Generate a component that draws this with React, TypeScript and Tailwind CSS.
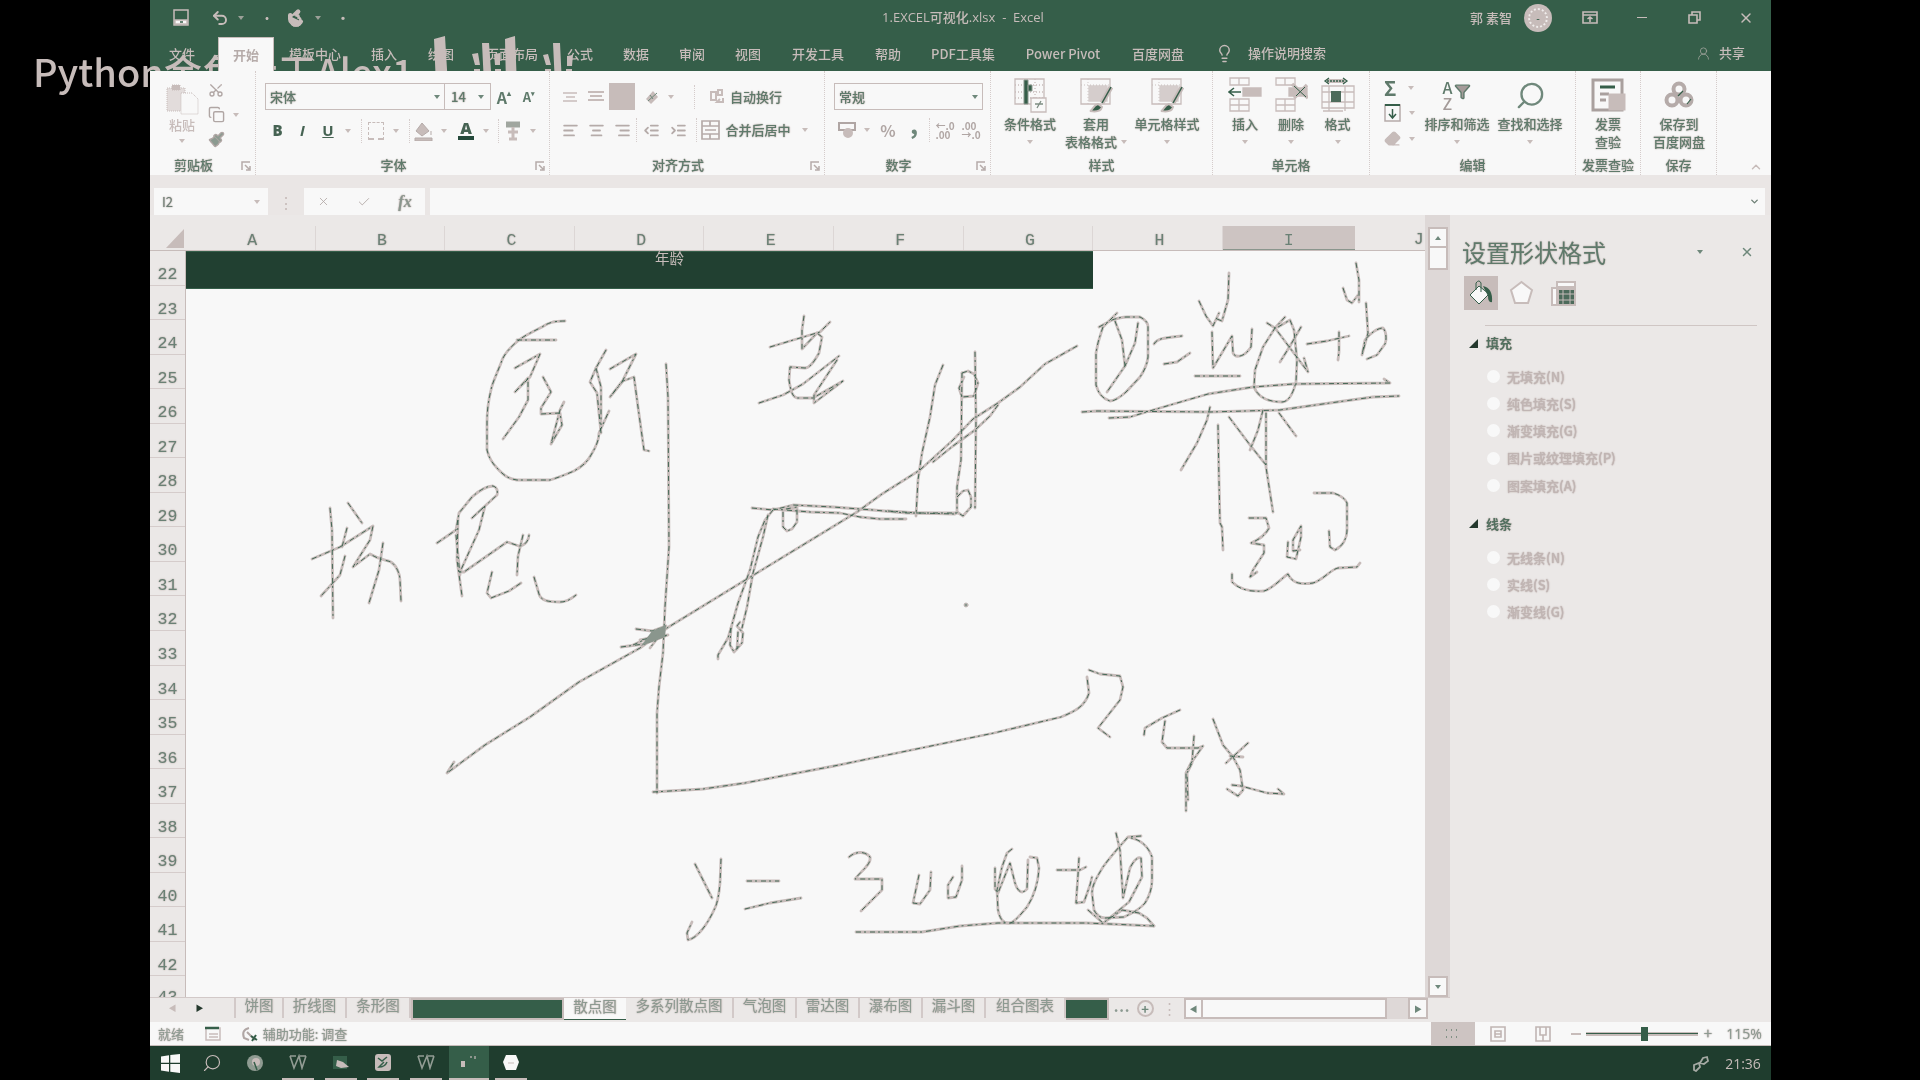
import React from 'react';
import {
  Undo2, Scissors, Copy, Paintbrush, Search, Lightbulb, UserRound, X, Check, ChevronUp, ChevronDown,
  AlignLeft, AlignCenter, AlignRight, IndentDecrease, IndentIncrease, Eraser, Filter, Pointer,
} from 'lucide-react';

const halo = '[text-shadow:0_0_1px_#c7bcba,0_0_1px_#c7bcba,0_0_2px_#c7bcba]';

/** Box of fixed width which centres its content. */
function C({ w, children, className = '' }: { w: string; children?: React.ReactNode; className?: string }) {
  return <div className={`flex shrink-0 items-center justify-center whitespace-nowrap ${w} ${className}`}>{children}</div>;
}

function Caret({ dark = false }: { dark?: boolean }) {
  return (
    <svg width="6" height="4" viewBox="0 0 6 4" className="shrink-0">
      <path d="M0 0h6L3 4z" fill={dark ? '#6f887b' : '#c7bcba'} />
    </svg>
  );
}

function Launcher() {
  return (
    <svg width="10" height="10" viewBox="0 0 10 10" className="absolute right-1 bottom-1" fill="none" stroke="#b5aba9" strokeWidth="1.5">
      <path d="M1 9V1h8M4 4l4 4M9 5v4H5" />
    </svg>
  );
}

function Group({ w, label, launcher, children }: { w: string; label: string; launcher?: boolean; children: React.ReactNode }) {
  return (
    <div className={`relative flex shrink-0 flex-col border-r border-dotted border-[#d5cccb] ${w}`}>
      <div className="h-[85px]">{children}</div>
      <div className={`text-center leading-[18px] ${launcher ? 'pr-[18px]' : ''} ${halo}`}>{label}</div>
      {launcher && <Launcher />}
    </div>
  );
}

function Big({ w, icon, lines, caret }: { w: string; icon: React.ReactNode; lines: string[]; caret?: boolean }) {
  return (
    <div className={`flex shrink-0 flex-col items-center ${w}`}>
      <div className="flex h-[44px] items-center pt-1">{icon}</div>
      {lines.map((l, i) => (
        <div key={l} className={`flex h-[18px] items-center gap-1 whitespace-nowrap ${halo}`}>
          {l}{i === 1 && caret && <Caret />}
        </div>
      ))}
      {lines.length === 1 && caret && <div className="flex h-[18px] items-center"><Caret /></div>}
    </div>
  );
}

const Sep = () => <div className="h-6 w-px shrink-0 border-l border-dotted border-[#d5cccb]" />;
const G = '#355e49';
const P = '#c7bcba';

function TableIcon({ kind }: { kind: 'cond' | 'table' | 'cell' }) {
  return (
    <svg width="34" height="36" viewBox="0 0 34 36" fill="none" stroke={P} strokeWidth="1.3">
      <path d="M2 2h29v25H2z" />
      {kind === 'cond' ? (
        <g><path d="M2 8h29M2 15h29M2 21h29M22 2v25" strokeDasharray="1 2" /><path d="M11 3h4v24h-4zM15 8h4v6h-4z" fill={G} stroke="#8a968d" strokeWidth="1" /><path d="M18 21h15v14H18z" fill="#f8f8f8" /><path d="M24 31l4-7M22 27h8" stroke="#7d8d83" /></g>
      ) : (
        <g><path d="M2 8h29M9 2v25" opacity=".6" strokeDasharray="1 2" /><path d="M10 9h18v15H10z" fill={P} opacity=".7" /><path d="M32 10l-9 16" stroke={P} strokeWidth="5" /><path d="M32 10l-9 16" stroke={G} strokeWidth="1.500" /><path d="M11 34c3-1 3-6 8-7l4 3c-1 4-6 5-12 4z" fill={G} strokeWidth="2" /></g>
      )}
    </svg>
  );
}

function CellsIcon({ kind }: { kind: 'in' | 'del' | 'fmt' }) {
  return (
    <svg width="34" height="36" viewBox="0 0 34 36" fill="none" stroke={P} strokeWidth="1.3">
      {kind === 'fmt' ? (
        <g><path d="M6 4h18" strokeWidth="4" /><path d="M6 4h18" stroke={G} strokeDasharray="2 1" /><path d="M8 1L4 4l4 3M22 1l4 3-4 3" stroke={G} /><path d="M1 9h32v22H1zM1 15h32M1 25h32M8 9v25M24 9v25M2 34h20" /><path d="M10 14h10v11H10z" fill="#4d6b5b" stroke="none" /></g>
      ) : (
        <g><path d="M2 1h19v7H2zM11 1v7M2 22h19v12H2zM2 28h19M11 22v12" /><path d="M15 11h18v8H15z" fill={P} />
          {kind === 'in' ? <path d="M13 15H1M6 11l-5 4 5 4" stroke={G} strokeWidth="1.600" /> : <g><path d="M18 7l16 14M33 8L20 21" strokeWidth="3.500" /><path d="M20 9l12 11M31 10L22 19" stroke={G} strokeWidth="1" /></g>}</g>
      )}
    </svg>
  );
}

const tabs: [string, string][] = [
  ['文件', 'w-[64px]'], ['开始', 'w-[56px]'], ['模板中心', 'w-[82px]'], ['插入', 'w-[56px]'], ['绘图', 'w-[58px]'],
  ['页面布局', 'w-[84px]'], ['公式', 'w-[52px]'], ['数据', 'w-[60px]'], ['审阅', 'w-[52px]'], ['视图', 'w-[60px]'],
  ['开发工具', 'w-[80px]'], ['帮助', 'w-[60px]'], ['PDF工具集', 'w-[90px]'], ['Power Pivot', 'w-[110px]'], ['百度网盘', 'w-[80px]'],
];

function TitleBar() {
  return (
    <div className="h-[71px] bg-[#355e49] text-[13px] font-medium text-[#c7bcba]">
      <div className="flex h-[35px] items-center">
        <C w="w-[62px]">
          <svg width="16" height="17" viewBox="0 0 16 17" fill="none" stroke={P} strokeWidth="1.5"><path d="M1 1h14v15H1z" /><path d="M2 11h12v4H2z" fill="#f8f8f8" /><path d="M7 13h3" stroke={G} /></svg>
        </C>
        <Undo2 size={18} strokeWidth={2.600} className="-ml-px mr-[9px] shrink-0" />
        <C w="w-[6px]" className="opacity-70"><Caret /></C>
        <C w="w-[10px]" className="ml-[18px]">·</C>
        <Pointer size={18} className="ml-[15px] shrink-0 rotate-45 fill-[#c7bcba]" />
        <C w="w-[26px]" className="opacity-70"><Caret /></C>
        <C w="w-[24px]" className="font-bold">•</C>
        <C w="w-[170px]" className="ml-[523px] font-['Open_Sans','Noto_Sans_CJK_SC',sans-serif]">1.EXCEL可视化.xlsx&nbsp; -&nbsp; Excel</C>
        <C w="w-[44px]" className="ml-[421px]">郭 素智</C>
        <C w="w-[28px]" className="ml-[11px] h-7 rounded-full bg-[#c7bcba]"><div className="h-5 w-5 rounded-full border-2 border-dotted border-[#efeceb] text-center text-[10px] leading-4 text-[#355e49]">-</div></C>
        <C w="w-[18px]" className="ml-[29px]">
          <svg width="16" height="13" viewBox="0 0 16 13" fill="none" stroke={P} strokeWidth="1.6"><path d="M1 1h14v11H1zM1 4h14M8 11V6M5.500 8L8 6l2.500 2" /></svg>
        </C>
        <C w="w-[12px]" className="ml-[37px]"><div className="h-px w-2.5 bg-[#c7bcba]" /></C>
        <C w="w-[14px]" className="ml-[39px]">
          <svg width="13" height="13" viewBox="0 0 13 13" fill="none" stroke={P} strokeWidth="1.600"><path d="M1 4h8v8H1zM4 4V1h8v8H9" /></svg>
        </C>
        <C w="w-[16px]" className="ml-[37px]"><X size={16} strokeWidth={2.200} /></C>
      </div>
      <div className="flex h-[36px] items-center">
        {tabs.map(([t, w]) => (
          <div key={t} className={`flex h-[34px] shrink-0 items-center justify-center self-end whitespace-nowrap ${w} ${t === '文件' ? 'mr-[4px]' : ''} ${t === '开始' ? 'border border-b-0 border-[#c7bcba] bg-[#f8f8f8] font-bold text-[#b5aba9]' : ''}`}>{t}</div>
        ))}
        <Lightbulb size={19} strokeWidth={1.800} className="ml-[17px] shrink-0" />
        <C w="w-[80px]" className="ml-[13px]">操作说明搜索</C>
        <UserRound size={15} strokeWidth={1.200} className="ml-[369px] shrink-0 opacity-80" />
        <C w="w-[26px]" className="ml-[8px]">共享</C>
      </div>
    </div>
  );
}

function Ribbon() {
  return (
    <div className="flex h-[104px] bg-[#f8f8f8] text-[13px] font-medium text-[#5f7a6b]">
      <Group w="w-[106px]" label="剪贴板" launcher>
        <div className="flex">
          <div className="ml-[12px] flex w-[40px] flex-col items-center pt-[13px] text-[#c7bcba]">
            <svg width="34" height="32" viewBox="0 0 34 32" fill="none" stroke={P} strokeDasharray="1 1"><path d="M2 4h18v23H2z" fill="#e2dcdb" /><path d="M7 1h8v5H7z" fill={P} /><path d="M16 9h11l6 6v15H16z" fill="#f8f8f8" /></svg>
            <div className="leading-[18px]">粘贴</div>
            <div className="pt-[5px]"><Caret /></div>
          </div>
          <div className="ml-[6px] flex flex-col gap-[8px] pt-[11px] text-[#b0a6a4]">
            <Scissors size={16} className="-rotate-90" />
            <div className="flex items-center gap-2"><Copy size={17} /><Caret /></div>
            <Paintbrush size={17} className="fill-[#8b9a90]" />
          </div>
        </div>
      </Group>

      <Group w="w-[294px]" label="字体" launcher>
        <div className="flex items-center pt-[12px] pl-[9px]">
          <div className="flex h-[27px] w-[180px] items-center justify-between border border-[#c7bcba] px-1"><span className={halo}>宋体</span><Caret dark /></div>
          <div className="flex h-[27px] w-[46px] items-center justify-between border border-l-0 border-[#c7bcba] px-1.5"><span className={halo}>14</span><Caret dark /></div>
          <C w="w-[26px]" className="text-[16px] font-bold">A<sup className="text-[8px]">▴</sup></C>
          <C w="w-[24px]" className="text-[13px] font-bold">A<sup className="text-[7px]">▾</sup></C>
        </div>
        <div className="flex h-[28px] items-center pt-[13px] pl-[9px] font-['Open_Sans',sans-serif] text-[#466353]">
          <C w="w-[25px]" className="text-[15px] font-extrabold">B</C>
          <C w="w-[25px]" className="text-[15px] font-bold italic">I</C>
          <C w="w-[26px]" className="text-[15px] font-bold underline">U</C>
          <C w="w-[14px]"><Caret /></C><C w="w-[12px]"><Sep /></C>
          <C w="w-[18px]"><div className="h-[18px] w-4 border border-b-2 border-dashed border-[#c7bcba]" /></C>
          <C w="w-[22px]"><Caret /></C><C w="w-[4px]"><Sep /></C>
          <C w="w-[24px]"><svg width="19" height="20" viewBox="0 0 19 20"><path d="M8 2l7 8-7 5-6-5zM17 10v4M1 17h17v3H1z" fill={P} stroke="#b5aba9" /></svg></C>
          <C w="w-[18px]"><Caret /></C>
          <C w="w-[26px]"><div className="border-b-4 border-[#24493a] px-0.5 text-[16px] leading-[15px] font-extrabold">A</div></C>
          <C w="w-[14px]"><Caret /></C><C w="w-[10px]"><Sep /></C>
          <C w="w-[20px]"><svg width="16" height="20" viewBox="0 0 16 20" stroke={P} strokeWidth="3" fill="none"><path d="M1 2h14M1 5h14" stroke="#a0a69f" /><path d="M8 6v12M3 11h10M4 18h8" /></svg></C>
          <C w="w-[20px]"><Caret /></C>
        </div>
      </Group>

      <Group w="w-[275px]" label="对齐方式" launcher>
        <div className="flex items-center pt-[12px] pl-[7px] text-[#b5aba9]">
          <C w="w-[26px]"><svg width="14" height="10" stroke={P} strokeWidth="1.500"><path d="M0 1h14M3 5h9M0 9h14" /></svg></C>
          <C w="w-[26px]"><svg width="16" height="11" stroke={P} strokeWidth="2"><path d="M0 1h16M2 5h12M0 9h16" /></svg></C>
          <div className="h-[27px] w-[26px] bg-[#c7bcba]" />
          <C w="w-[34px]"><svg width="16" height="16" viewBox="0 0 16 16" fill="none"><path d="M2 10l7-8 5 6-7 7z" fill={P} /><path d="M4 12L13 4M6 6l3 4" stroke="#6f887b" /></svg></C>
          <C w="w-[4px]"><Caret /></C>
          <C w="w-[42px]"><Sep /></C>
          <svg width="15" height="18" viewBox="0 0 15 18" className="-ml-[6px] shrink-0" fill="none" stroke={P} strokeWidth="2"><path d="M2 4h5v8H2zM9 2h4v5H9zM14 10v4H8l3-3" /></svg>
          <C w="w-[54px]" className={`ml-[5px] text-[#5f7a6b] ${halo}`}>自动换行</C>
        </div>
        <div className="flex items-center pt-[8px] pl-[7px] text-[#b5aba9]">
          <C w="w-[26px]"><AlignLeft size={17} strokeWidth={2.500} /></C><C w="w-[26px]"><AlignCenter size={17} strokeWidth={2.500} /></C><C w="w-[26px]"><AlignRight size={17} strokeWidth={2.500} /></C>
          <C w="w-[3px]"><Sep /></C>
          <C w="w-[27px]"><IndentDecrease size={17} strokeWidth={2.500} /></C><C w="w-[26px]"><IndentIncrease size={17} strokeWidth={2.500} /></C>
          <C w="w-[10px]"><Sep /></C>
          <svg width="19" height="20" viewBox="0 0 19 20" fill="none" stroke="#b5aba9" strokeWidth="1.700"><path d="M1 1h17v18H1zM1 6h17M1 14h17M9 1v5M9 14v5M4 10h11" /></svg>
          <C w="w-[66px]" className={`ml-[5px] text-[#5f7a6b] ${halo}`}>合并后居中</C>
          <C w="w-[28px]"><Caret /></C>
        </div>
      </Group>

      <Group w="w-[166px]" label="数字" launcher>
        <div className="flex pt-[12px] pl-[9px]">
          <div className="flex h-[27px] w-[149px] items-center justify-between border border-[#c7bcba] px-1"><span className={halo}>常规</span><Caret dark /></div>
        </div>
        <div className="flex items-center pt-[8px] pl-[10px] text-[#b0a6a4]">
          <C w="w-[24px]"><svg width="18" height="19" viewBox="0 0 18 19" fill="none" stroke="#b0a6a4" strokeWidth="2"><path d="M1 2h16v7H1z" /><ellipse cx="10" cy="12" rx="4" ry="4" fill={P} stroke={P} /></svg></C>
          <C w="w-[16px]"><Caret /></C>
          <C w="w-[26px]" className="text-[16px] font-bold">%</C>
          <C w="w-[26px]" className="h-5 pb-3 text-[22px] font-black text-[#6f887b]">,</C>
          <C w="w-[4px]"><Sep /></C>
          <C w="w-[28px]" className="text-[10px] leading-[9px] font-bold"><span>←.0<br />.00</span></C>
          <C w="w-[24px]" className="text-[10px] leading-[9px] font-bold"><span>.00<br />→.0</span></C>
        </div>
      </Group>

      <Group w="w-[222px]" label="样式">
        <div className="flex pl-[6px]">
          <Big w="w-[66px]" icon={<TableIcon kind="cond" />} lines={['条件格式']} caret />
          <Big w="w-[66px]" icon={<TableIcon kind="table" />} lines={['套用', '表格格式']} caret />
          <Big w="w-[76px]" icon={<TableIcon kind="cell" />} lines={['单元格样式']} caret />
        </div>
      </Group>

      <Group w="w-[157px]" label="单元格">
        <div className="flex pl-[9px]">
          <Big w="w-[46px]" icon={<CellsIcon kind="in" />} lines={['插入']} caret />
          <Big w="w-[46px]" icon={<CellsIcon kind="del" />} lines={['删除']} caret />
          <Big w="w-[47px]" icon={<CellsIcon kind="fmt" />} lines={['格式']} caret />
        </div>
      </Group>

      <Group w="w-[206px]" label="编辑">
        <div className="flex">
          <div className="flex w-[53px] flex-col pt-[4px] pl-[14px]">
            <div className="flex h-[25px] items-center gap-2 text-[20px] font-bold"><span className="w-[16px]">Σ</span><Caret /></div>
            <div className="flex h-[25px] items-center gap-2"><svg width="17" height="19" viewBox="0 0 17 19" fill="none" stroke="#b5aba9" strokeWidth="1.500"><path d="M1 2h15v16H1z" /><path d="M1 2h15" stroke={G} strokeWidth="2" /><path d="M8.500 6v8M5 11l3.500 4 3.500-4" stroke={G} /></svg><Caret /></div>
            <div className="flex h-[27px] items-center gap-2 text-[#c7bcba]"><Eraser size={17} className="fill-[#c7bcba]" /><Caret /></div>
          </div>
          <Big w="w-[68px]" icon={<div className="flex items-center"><span className="text-[16px] leading-[16px]">A<br /><span className="text-[#a49b99]">Z</span></span><Filter size={17} strokeWidth={2} className="mb-2 ml-0.5 fill-[#a49b99]" /></div>} lines={['排序和筛选']} caret />
          <Big w="w-[78px]" icon={<Search size={31} strokeWidth={1.800} className="-scale-x-100 text-[#6f887b]" />} lines={['查找和选择']} caret />
        </div>
      </Group>

      <Group w="w-[65px]" label="发票查验">
        <Big w="w-[64px]" icon={<svg width="35" height="34" viewBox="0 0 35 34" fill="none" stroke="#a9a09e" strokeWidth="3"><path d="M2 2h29v30H2z" /><path d="M9 9h15" stroke={G} /><path d="M9 16h9M9 22h6" /><path d="M19 17h14v14H19z" fill={P} stroke={P} /></svg>} lines={['发票', '查验']} />
      </Group>
      <Group w="w-[76px]" label="保存">
        <Big w="w-[76px]" icon={<svg width="30" height="28" viewBox="0 0 30 28" fill="none" stroke="#b5aba9" strokeWidth="4"><circle cx="15" cy="8" r="5.500" /><circle cx="8" cy="19" r="5.500" /><circle cx="22" cy="19" r="5.500" /><path d="M14 15l5-5M23 23l4-5" stroke={G} strokeWidth="1.200" /></svg>} lines={['保存到', '百度网盘']} />
      </Group>
      <div className="flex flex-1 items-end justify-end pr-[8px] pb-[1px]"><ChevronUp size={14} strokeWidth={2.500} className="text-[#c7bcba]" /></div>
    </div>
  );
}

function FormulaBar() {
  return (
    <div className="flex h-[40px] items-end bg-[#eae6e5] text-[12px] text-[#6d7f75]">
      <div className="ml-1 flex h-[27px] w-[114px] items-center justify-between bg-[#f8f8f8] pr-2 pl-2"><span className={`text-[13px] ${halo}`}>I2</span><Caret /></div>
      <C w="w-[36px]" className="h-[27px] text-[16px] text-[#c7bcba]">⋮</C>
      <div className="flex h-[27px] w-[121px] items-center bg-[#f8f8f8] text-[#b0a6a4]">
        <C w="w-[38px]"><X size={13} strokeWidth={1.500} /></C><C w="w-[43px]"><Check size={14} strokeWidth={1.500} /></C>
        <C w="w-[40px]" className={`font-['Liberation_Serif',serif] text-[16px] font-bold text-[#8a968d] italic ${halo}`}>fx</C>
      </div>
      <div className="ml-[5px] flex h-[27px] w-[1335px] items-center justify-end bg-[#f8f8f8] pr-[5px]"><ChevronDown size={11} strokeWidth={3} /></div>
    </div>
  );
}

const strokes: string[] = [
  'M565 321C553 321 548 323 542 327 530 333 524 336 519 340 509 348 503 356 501 363 495 378 492 384 491 390 488 402 487 412 487 423L487 450C489 458 492 463 497 468 505 477 510 479 517 480L550 480C560 477 567 474 574 471 583 466 588 461 591 455 596 447 599 440 599 433L609 411',
  'M517 340H556', 'M515 368L540 354 530 377 515 392 528 378 528 400 519 417 503 439', 'M543 377L551 392 541 408 541 414 560 413 562 425 551 444 560 410 564 402',
  'M606 350L596 368 590 382 597 393 601 433', 'M596 368L601 387 601 425', 'M610 369L636 354 623 380 610 397 623 381 634 377 638 407 644 450 649 451',
  'M666 364L668 397 669 547 665 607 663 653 659 687 657 713 657 793',
  'M312 559L340 547 373 526 370 540 353 567 370 554C380 560 386 560 391 562 397 566 400 575 400 580L401 601', 'M330 508L332 530 333 618', 'M348 503L362 523',
  'M347 528L342 547', 'M345 556L340 575 321 596', 'M383 543L379 570 369 603',
  'M437 543L456 530 459 513 472 497C482 488 488 486 493 486 497 487 498 491 497 495L485 506 472 518 485 506 479 530 460 572 464 572 507 542 519 546C525 546 529 540 529 535',
  'M458 520L457 560 462 596', 'M456 535L460 575', 'M523 535L518 556 517 575', 'M492 572L487 593 491 598 509 591 521 583', 'M534 577L539 594C541 601 549 602 560 602 568 602 572 598 576 595',
  'M770 347L800 338 820 332 830 322', 'M804 316L802 330 802 349 817 333 822 337 819 353C813 364 809 368 805 368L790 367 789 380C791 393 793 397 797 398L813 398 843 381 814 403 814 395 837 360',
  'M759 403L783 395 803 384 839 356',
  'M1077 346L1045 364 1020 387 998 403 973 419 953 440 920 470 882 494 857 512 752 576 667 628 640 648 579 682 530 717 485 745 447 773 454 762', 'M998 405L990 416 975 430 953 446 933 462',
  'M636 629L652 631 666 626', 'M621 647L644 644 668 635 640 640', 'M633 645L663 631 650 648',
  'M752 508L773 510 793 505 833 507 873 510 907 513 957 513', 'M773 509L810 512 840 513 860 517 880 519 906 519', 'M888 511L918 513 955 514',
  'M773 510L765 520 758 537 750 570 738 603 731 628 728 638 718 655 718 659', 'M768 515L763 537 753 573 747 607 742 628', 'M731 628L730 645 734 652 742 643 743 633 737 626 740 622', 'M738 632L737 649',
  'M783 512L783 527 787 531 792 529 797 522 797 507 786 509', 'M943 365L935 385 930 417 922 453 918 480 916 516', 'M962 373L961 460 957 487 957 513', 'M975 352L976 420 975 508',
  'M962 373L968 371 974 374 978 383 974 396 962 397 959 388 964 377', 'M957 497L963 491 968 490 971 497 971 507 963 516 957 512',
  'M1099 327L1112 320C1118 318 1121 317 1127 317L1140 317C1146 320 1148 323 1148 327L1148 357C1147 366 1144 371 1140 377L1126 392C1118 399 1114 401 1110 401 1101 398 1098 392 1096 385L1096 353C1098 340 1101 333 1103 327L1117 313',
  'M1115 321L1122 340 1125 366', 'M1138 323L1135 343 1125 366 1107 392', 'M1154 344C1157 339 1161 338 1182 336', 'M1164 364L1177 362 1190 353', 'M1199 301L1206 316 1213 326 1219 313', 'M1217 319L1222 321 1228 300 1229 273',
  'M1212 332L1213 368 1232 336 1233 353C1235 358 1244 358 1251 347L1252 329', 'M1195 376H1240',
  'M1285 317L1275 328 1263 347 1255 370 1254 387C1258 398 1270 402 1282 402 1288 402 1293 394 1296 382L1297 360 1294 330 1290 320 1278 327', 'M1267 323L1275 328 1308 372 1304 358', 'M1301 327L1290 346 1280 362',
  'M1307 344L1327 341 1349 336', 'M1339 332L1339 352 1338 360', 'M1366 303L1368 333 1362 355 1365 340C1370 333 1378 328 1383 328 1386 331 1387 339 1385 344L1377 355 1367 359', 'M1356 263L1359 280 1359 302', 'M1343 288L1347 300 1352 303 1358 295',
  'M1109 418L1130 417 1153 410 1208 394 1253 387 1293 384 1390 383 1384 379', 'M1082 412L1097 411 1210 412 1280 410 1337 402 1373 397 1399 396',
  'M1210 407L1207 420 1197 443 1181 470', 'M1218 425L1219 480 1220 523 1222 527 1223 550', 'M1229 417L1250 445 1266 465', 'M1263 410L1258 430 1250 450', 'M1266 413L1266 467 1273 512', 'M1279 413L1296 436',
  'M1249 518L1266 518 1269 528C1265 536 1258 540 1251 543L1264 545 1264 553 1253 570 1250 577 1257 572', 'M1288 542L1287 557 1296 559 1301 537 1301 526 1293 540 1293 551 1300 550',
  'M1329 531L1330 547 1335 550C1343 546 1347 538 1347 530L1347 503C1344 496 1336 494 1333 493L1314 493', 'M1232 574L1232 582C1240 590 1250 592 1264 591 1272 589 1282 578 1288 574 1292 583 1300 585 1313 583 1323 580 1330 570 1338 568L1357 567 1360 563',
  'M653 792L703 789 745 783 834 766 994 733 1061 717C1076 711 1085 706 1089 693L1087 677', 'M1089 670L1100 674 1120 676 1123 687 1120 700 1098 728 1110 737', 'M1144 735L1145 728 1162 718 1180 710', 'M1165 721L1162 742 1167 748 1198 748 1203 746 1191 763 1186 773 1186 811', 'M1194 736L1192 763 1187 773 1188 800',
  'M1213 719L1223 745 1233 757 1240 770 1243 790 1238 796 1227 789', 'M1248 743L1226 763', 'M1230 756L1243 757', 'M1232 785L1241 786 1267 793 1284 794 1278 789',
  'M695 864L712 898', 'M721 859L720 883C719 895 717 905 714 910 708 923 698 938 688 940L687 933 692 922', 'M747 881H779', 'M745 909L770 903 801 898',
  'M849 857C856 851 865 851 870 857 872 864 860 872 855 879L882 879 882 890 861 911', 'M919 875L913 903 920 904 930 890 931 872', 'M953 877L948 885 948 898 956 897 962 880 962 866',
  'M995 868L995 889 998 893 1010 863 1015 883C1018 893 1023 894 1027 889L1028 860', 'M1012 849L1007 853 1002 867 997 890 998 910C1000 920 1004 924 1010 923 1015 922 1021 914 1027 907 1034 896 1038 885 1039 868L1037 858 1030 857',
  'M1057 870H1080L1086 867', 'M1079 858L1078 875 1076 903 1084 902 1090 885 1092 877', 'M1116 833L1120 850 1123 898 1130 868C1135 858 1139 857 1141 858L1142 877 1129 902 1107 920',
  'M1141 836L1128 837C1120 846 1110 857 1103 867 1097 877 1092 885 1092 893L1094 910C1097 916 1101 918 1105 918L1124 917C1135 912 1141 908 1145 903 1150 895 1152 888 1152 880L1152 857C1148 846 1141 840 1131 838',
  'M1088 910L1103 923 1122 910 1139 913 1147 918 1154 926', 'M856 932L922 932 960 926 998 923 1086 923 1110 924 1154 926',
];

function Ink() {
  return (
    <svg className="absolute top-0 left-0" width="1239" height="746" viewBox="186 251 1239 746" fill="none" strokeLinejoin="round" strokeLinecap="round">
      <g stroke="#c7bcba" strokeWidth="2.800">{strokes.map((d) => <path key={d} d={d} />)}</g>
      <g stroke="#355e49" strokeWidth=".9" strokeDasharray="5 3 2 4" strokeLinecap="butt">{strokes.map((d) => <path key={d} d={d} />)}</g>
      <path d="M652 631l14-6-1 12-24 9z" fill="#8a968d" />
      <circle cx="966" cy="605" r="2" fill="#8a968d" stroke="#c7bcba" />
    </svg>
  );
}

const rows = ['22', '23', '24', '25', '26', '27', '28', '29', '30', '31', '32', '33', '34', '35', '36', '37', '38', '39', '40', '41', '42'];

function Sheet() {
  return (
    <div className="flex w-[1275px] flex-col font-['Liberation_Mono',monospace] text-[16.500px] text-[#6a8175]">
      <div className="flex h-[36px] items-end border-b border-[#c7bcba] bg-[#ebe8e7]">
        <div className="flex h-full w-[36px] items-end justify-end pr-[2px] pb-[2px]"><svg width="18" height="19"><path d="M18 0v19H0z" fill={P} /></svg></div>
        {['A', 'B', 'C', 'D', 'E', 'F', 'G', 'H'].map((c) => (
          <div key={c} className={`h-[24px] w-[129.6px] shrink-0 border-r border-[#dcd6d5] pl-1 text-center leading-[30px] ${halo}`}>{c}</div>
        ))}
        <div className="h-[24px] w-[132px] shrink-0 border-b border-[#8a968d] bg-[#cdc4c2] text-center leading-[30px]">I</div>
        <div className={`ml-[59px] leading-[20px] ${halo}`}>J</div>
      </div>
      <div className="flex h-[746px]">
        <div className="flex h-full w-[36px] flex-col overflow-hidden border-r border-[#c7bcba] bg-[#ebe8e7]">
          {rows.map((r) => (
            <div key={r} className={`h-[34.55px] shrink-0 border-b border-[#d5cccb] pt-[7px] text-center leading-[34px] ${halo}`}>{r}</div>
          ))}
          <div className={`h-[30px] shrink-0 pt-[5px] text-center leading-[34px] ${halo}`}>43</div>
        </div>
        <div className="relative h-full flex-1 overflow-hidden bg-[#f8f8f8]">
          <div className="h-[38px] w-[907px] border-y border-[#355e49] bg-[#214031] pl-[469px] font-['Noto_Sans_CJK_SC',sans-serif] text-[14.500px] leading-[12px] text-[#c7bcba]">年龄</div>
          <Ink />
        </div>
      </div>
    </div>
  );
}

function VScroll() {
  return (
    <div className="flex w-[25px] flex-col items-center bg-[#ded8d7] pt-[12px]">
      <C w="w-[20px]" className="h-[21px] border-2 border-[#c7bcba] bg-[#f8f8f8]"><div className="rotate-180"><Caret dark /></div></C>
      <div className="h-[22px] w-[20px] border-2 border-t-0 border-[#c7bcba] bg-[#f8f8f8]" />
      <div className="flex-1" />
      <C w="w-[20px]" className="h-[21px] border-2 border-[#c7bcba] bg-[#f8f8f8]"><Caret dark /></C>
    </div>
  );
}

function Section({ title, items }: { title: string; items: string[] }) {
  return (
    <div>
      <div className="flex h-[34px] items-center pl-[19px]">
        <svg width="10" height="9"><path d="M9 0v9H0z" fill="#24382d" /></svg>
        <span className={`ml-[7px] font-bold text-[#52705f] ${halo}`}>{title}</span>
      </div>
      <div className="flex flex-col pt-[3px] text-[#c0b5b3]">
        {items.map((t) => (
          <div key={t} className={`flex h-[27.200px] items-center pl-[37px] font-medium ${halo}`}><span className="mr-[7px] h-[13px] w-[13px] rounded-full bg-[#f8f8f8]" />{t}</div>
        ))}
      </div>
    </div>
  );
}

function FormatPanel() {
  return (
    <div className="flex-1 bg-[#ebe8e7] text-[13px]">
      <div className="mt-[15px] flex h-[44px] items-center pl-[12px]">
        <span className={`w-[150px] text-[24px] whitespace-nowrap text-[#5f7a6b] ${halo}`}>设置形状格式</span>
        <C w="w-[10px]" className="ml-[83px]"><Caret dark /></C>
        <C w="w-[16px]" className="ml-[34px] text-[#6f887b]"><X size={14} strokeWidth={2.500} /></C>
      </div>
      <div className="ml-[14px] flex h-[38px] items-center">
        <C w="w-[34px]" className="h-[34px] bg-[#c7bcba]">
          <svg width="27" height="26" viewBox="0 0 27 26" fill="none"><path d="M11 6L2 15l9 9 10-10z" fill="#f8f8f8" stroke={G} /><path d="M8 10V3q3-4 5 0v9" stroke={G} /><path d="M15 6q10 2 9 16-4 1-4-6z" fill={G} /></svg>
        </C>
        <C w="w-[46px]"><svg width="25" height="26" viewBox="0 0 25 26"><path d="M12.500 2L23 10l-4 13H6L2 10z" fill="#f8f8f8" stroke={P} strokeWidth="2" /></svg></C>
        <C w="w-[38px]"><svg width="25" height="25" viewBox="0 0 25 25" fill="none" stroke="#c7bcba" strokeWidth="2"><path d="M6 1h18v5H6zM1 7h5v17H1z" fill="#f8f8f8" /><path d="M7 8h17v16H7z" fill="#4d6b5b" /><path d="M12 8v16M19 8v16M7 13h17M7 19h17" strokeWidth="1" /></svg></C>
      </div>
      <div className="mt-[13px] mr-[14px] ml-[35px] h-px bg-[#cfc6c4]" />
      <Section title="填充" items={['无填充(N)', '纯色填充(S)', '渐变填充(G)', '图片或纹理填充(P)', '图案填充(A)']} />
      <div className="h-[8px]" />
      <Section title="线条" items={['无线条(N)', '实线(S)', '渐变线(G)']} />
    </div>
  );
}

const sheets: [string, string][] = [
  ['饼图', 'w-[48px]'], ['折线图', 'w-[63px]'], ['条形图', 'w-[64px]'], ['', 'w-[153px]'], ['散点图', 'w-[62px]'], ['多系列散点图', 'w-[108px]'],
  ['气泡图', 'w-[63px]'], ['雷达图', 'w-[63px]'], ['瀑布图', 'w-[63px]'], ['漏斗图', 'w-[63px]'], ['组合图表', 'w-[80px]'],
];

function SheetTabs() {
  return (
    <div className="flex h-[25px] items-start border-t border-[#d2c9c8] bg-[#ebe8e7] text-[14.500px] text-[#8c9a91]">
      <C w="w-[86px]" className="h-[20px] gap-[19px] border-r-2 border-[#d2c9c8] pr-3"><span className="text-[8px] text-[#c7bcba]">◀</span><span className="text-[8px] text-[#24382d]">▶</span></C>
      {sheets.map(([t, w]) =>
        t === '' ? (
          <div key="g" className={`h-[22px] shrink-0 border-2 border-[#c7bcba] bg-[#355e49] ${w}`} />
        ) : (
          <C key={t} w={w} className={`${halo} ${t === '散点图' ? 'h-[22px] border-b border-[#355e49] bg-[#f8f8f8] pb-1.5' : 'h-[20px] border-r-2 border-[#d2c9c8] pb-1.5'}`}>{t}</C>
        ),
      )}
      <div className="h-[22px] w-[43px] shrink-0 border-2 border-l-0 border-[#c7bcba] bg-[#355e49]" />
      <C w="w-[26px]" className="h-[20px] pb-1 font-bold tracking-wider">...</C>
      <C w="w-[18px]" className="ml-px h-[20px]"><div className="flex h-[17px] w-[17px] items-center justify-center rounded-full border-2 border-[#c7bcba] text-[13px] leading-none font-bold text-[#6f887b]">+</div></C>
      <C w="w-[30px]" className="h-[20px] text-[#c7bcba]">⋮</C>
      <C w="w-[19px]" className="h-[21px] border-2 border-[#c7bcba] bg-[#f8f8f8] text-[8px] text-[#6f887b]">◀</C>
      <div className="h-[21px] w-[184px] shrink-0 border-y-2 border-r-2 border-[#c7bcba] bg-[#f8f8f8]" />
      <div className="h-[21px] w-[21px] shrink-0 bg-[#ded8d7]" />
      <C w="w-[20px]" className="h-[21px] border-2 border-[#c7bcba] bg-[#f8f8f8] text-[8px] text-[#6f887b]">▶</C>
    </div>
  );
}

function StatusBar() {
  return (
    <div className={`flex h-[24px] items-center border-b border-[#c7bcba] bg-[#f8f8f8] text-[13px] text-[#8c9a91] ${halo}`}>
      <C w="w-[26px]" className="ml-[8px]">就绪</C>
      <svg width="16" height="15" viewBox="0 0 16 15" className="ml-[21px]" fill="none" stroke={P} strokeWidth="1.500"><path d="M1 2h14v12H1zM4 8h9M4 11h9" /><path d="M0 2h14" stroke={G} strokeWidth="2.500" /></svg>
      <svg width="17" height="16" viewBox="0 0 17 16" className="ml-[20px]" fill="none" stroke="#b0a6a4" strokeWidth="2"><path d="M8 2Q0 4 3 12l5 2M6 6l8 8" /><path d="M10 10l6 4M15 9l-4 6" stroke={G} /></svg>
      <C w="w-[88px]" className="ml-[3px]">辅助功能: 调查</C>
      <div className="flex-1" />
      <C w="w-[44px]" className="h-full bg-[#cdc4c2]"><svg width="14" height="9" stroke={G} strokeDasharray="1 4"><path d="M0 1h14M0 8h14" /></svg></C>
      <svg width="16" height="16" viewBox="0 0 16 16" className="ml-[15px]" fill="none" stroke="#c0b5b3" strokeWidth="1.600"><path d="M1 1h14v14H1zM5 5h6v6H5zM5 8h6" /></svg>
      <svg width="16" height="16" viewBox="0 0 16 16" className="ml-[29px]" fill="none" stroke="#c0b5b3" strokeWidth="1.600"><path d="M1 1h14v14H1zM5 1v8h6V1M8 9v6" /></svg>
      <C w="w-[10px]" className="ml-[20px]"><div className="h-0.5 w-2.5 bg-[#c7bcba]" /></C>
      <div className="ml-[5px] flex h-1 w-[112px] items-center bg-[#c7bcba]">
        <div className="h-px w-[55px] bg-[#355e49]" /><div className="h-[14px] w-[7px] shrink-0 bg-[#355e49]" /><div className="h-px w-[50px] bg-[#355e49]" />
      </div>
      <C w="w-[20px]" className="text-[15px]">+</C>
      <C w="w-[36px]" className="mr-[9px] ml-[8px] font-['Open_Sans',sans-serif] text-[14px]">115%</C>
    </div>
  );
}

function Running({ children, active, w }: { children: React.ReactNode; active?: boolean; w: string }) {
  return (
    <div className={`flex h-full shrink-0 flex-col items-center ${w}`}>
      <div className={`flex w-[40px] flex-1 items-center justify-center ${active ? 'bg-[#355e49]' : ''}`}>{children}</div>
      <div className={`h-[2px] bg-[#c7bcba] ${active ? 'w-[40px]' : 'w-[32px]'}`} />
    </div>
  );
}

const WpsW = () => (
  <svg width="18" height="16" viewBox="0 0 18 16" fill="none" stroke="#929c94" strokeWidth="1.600"><path d="M1 2l4 12 5-12 3 12 4-12M1 2h6M11 2h6" /></svg>
);

function Taskbar() {
  return (
    <div className="flex h-[34px] items-center bg-[#1f3d2e] text-[#c7bcba]">
      <C w="w-[40px]"><svg width="19" height="19" viewBox="0 0 19 19" fill="#f8f8f8"><path d="M0 2.500l8-1.200v7.500H0zM9.300 1.100L19 0v8.800H9.300zM0 10h8v7.700L0 16.500zM9.300 10H19v9l-9.700-1.200z" /></svg></C>
      <C w="w-[44px]"><Search size={20} strokeWidth={1.400} className="-scale-x-100" /></C>
      <C w="w-[42px]"><svg width="18" height="18" viewBox="0 0 18 18"><circle cx="9" cy="9" r="8" fill="#8f9b92" /><circle cx="10" cy="8" r="4" fill={P} /><path d="M8 8l3 8" stroke={G} strokeWidth="1.500" /></svg></C>
      <div className="flex h-full">
        <Running w="w-[43px]"><WpsW /></Running>
        <Running w="w-[43px]"><svg width="18" height="15" viewBox="0 0 18 15"><path d="M1 1h14v13H1z" fill={G} /><path d="M5 5l6 2 6 5-8 1-5-2z" fill={P} /></svg></Running>
        <Running w="w-[42px]"><svg width="16" height="17" viewBox="0 0 16 17"><rect width="16" height="17" rx="3" fill={P} /><path d="M3 4l4 3 5-4M12 8q-2 5-8 5l5-5" stroke={G} fill="none" strokeWidth="1.500" /></svg></Running>
        <Running w="w-[43px]"><WpsW /></Running>
        <Running active w="w-[43px]"><svg width="18" height="15" viewBox="0 0 18 15" fill={P}><path d="M1 6h4v6H1z" /><path d="M10 1h2v2h-2zM14 1h2v3h-2z" opacity=".6" /></svg></Running>
        <Running w="w-[42px]"><svg width="17" height="17" viewBox="0 0 17 17" fill="#f8f8f8"><path d="M3 1h10l3 7-3 8H3L0 8z" /><path d="M5 9h6" stroke={P} /></svg></Running>
      </div>
      <div className="flex-1" />
      <svg width="18" height="17" viewBox="0 0 18 17" fill="none" stroke="#a5aaa4" strokeWidth="1.800"><path d="M8 8l3-5 4-1 1 4-4 3zM2 10l5-2 1 4-4 4-2-1z" /></svg>
      <C w="w-[36px]" className="mr-[10px] ml-[15px] font-['Open_Sans',sans-serif] text-[14px]">21:36</C>
    </div>
  );
}

function Watermark() {
  return (
    <div className="absolute top-[44px] left-[33px] flex items-center text-[38px] leading-[54px] font-medium whitespace-nowrap text-[#c7bcba] mix-blend-lighten">
      <span>Python金角大王Alex1</span>
      <svg width="150" height="54" viewBox="430 35 150 54" className="absolute -top-[9px] left-[397px]" fill="currentColor">
        <path d="M434 39l11-3 3 50h-12zM482 43h7l3 42h-8zM505 39l10-3 2 50h-11zM553 43h7l2 42h-7zM472 54l6-1 2 12h-5zM494 54l6-1v12h-5zM543 55l5-1 3 11h-5zM567 56l6-1-1 11h-5zM474 69h6v16h-6zM495 69h6v16h-6zM545 69h6v16h-6zM566 69h6v16h-6z" />
      </svg>
    </div>
  );
}

export default function App() {
  return (
    <div className="relative h-[1080px] w-[1920px] overflow-hidden bg-black font-['Noto_Sans_CJK_SC',sans-serif]">
      <div className="ml-[150px] flex h-full w-[1621px] flex-col">
        <TitleBar />
        <Ribbon />
        <FormulaBar />
        <div className="flex h-[807px] bg-[#ebe8e7]">
          <div className="flex w-[1300px] flex-col">
            <div className="flex h-[782px]"><Sheet /><VScroll /></div>
            <SheetTabs />
          </div>
          <FormatPanel />
        </div>
        <StatusBar />
        <Taskbar />
      </div>
      <Watermark />
    </div>
  );
}
